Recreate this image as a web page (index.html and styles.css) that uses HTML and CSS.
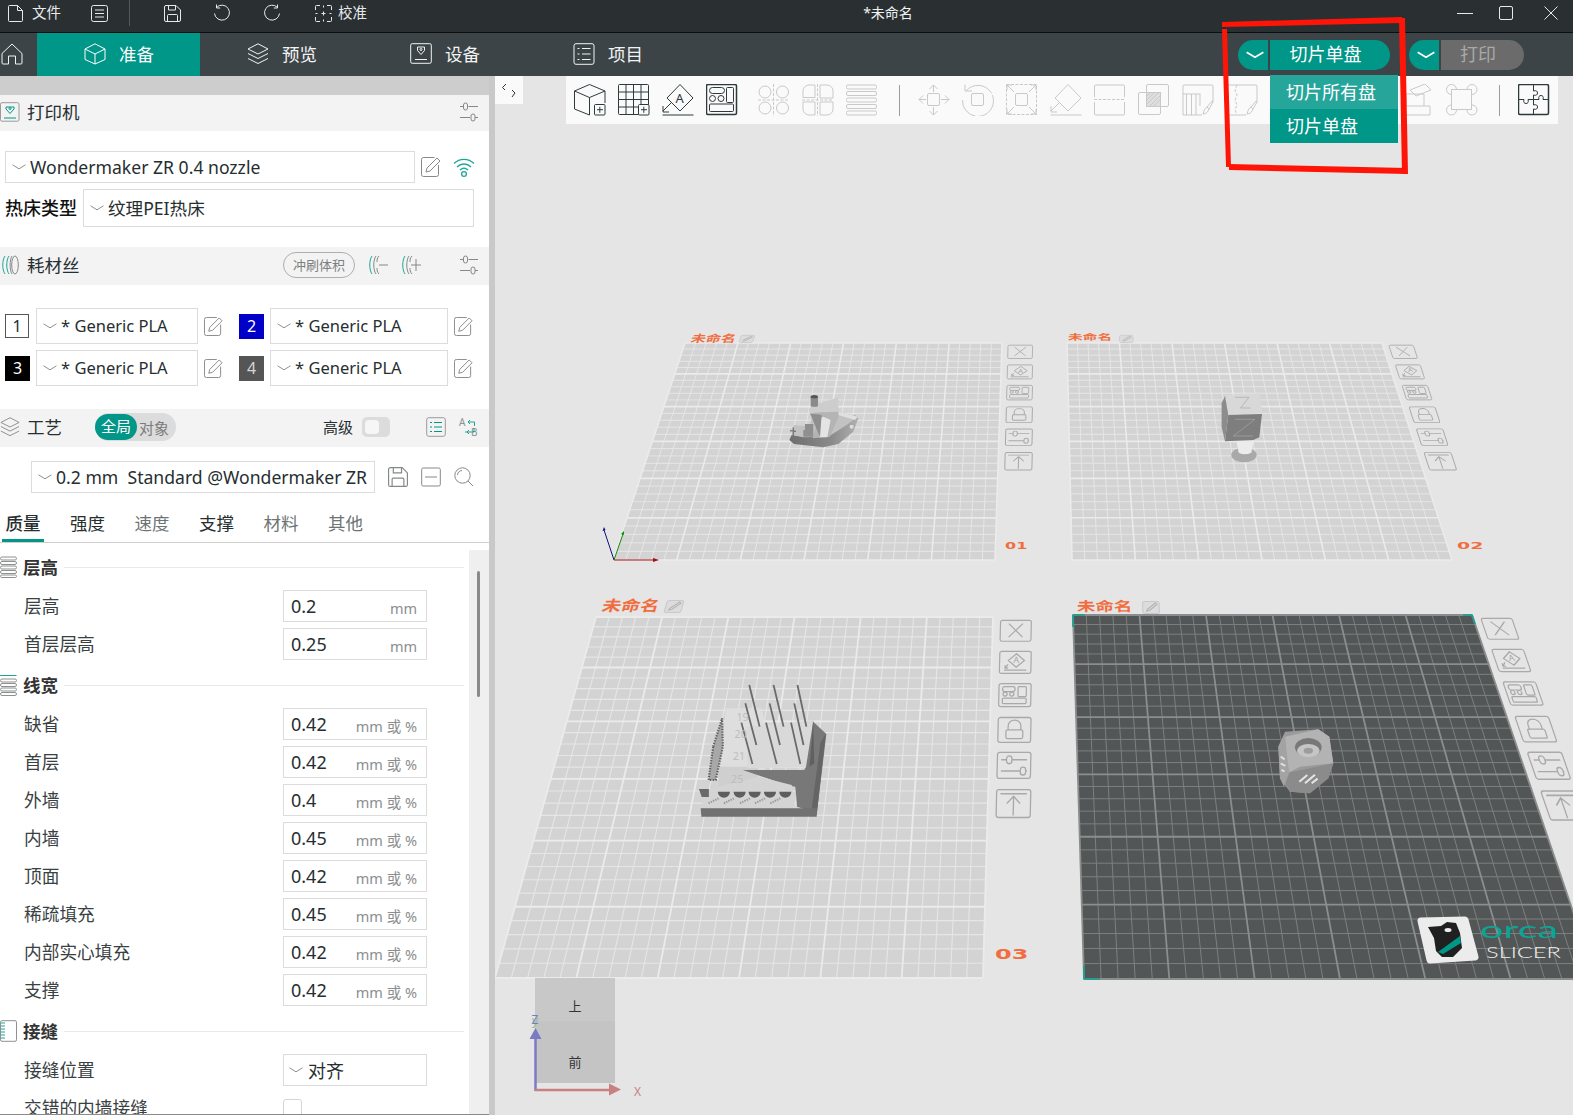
FILE: index.html
```html
<!DOCTYPE html>
<html lang="zh-CN">
<head>
<meta charset="utf-8">
<title>OrcaSlicer</title>
<link rel="stylesheet" href="styles.css">
</head>
<body>
<svg class="sprite" xmlns="http://www.w3.org/2000/svg">
  <symbol id="i-file" viewBox="0 0 17 17"><path d="M1.5 1.5a1 1 0 0 1 1-1h8l5 5v10a1 1 0 0 1-1 1h-12a1 1 0 0 1-1-1z M10.5.5v5h5"/></symbol>
  <symbol id="i-menu" viewBox="0 0 17 17"><rect x=".5" y=".5" width="16" height="16" rx="2"/><path d="M4 5h9M4 8.500h9M4 12h9"/></symbol>
  <symbol id="i-save" viewBox="0 0 17 17"><path d="M.5 2a1.500 1.500 0 0 1 1.500-1.500h10l4.500 4.500v10a1.500 1.500 0 0 1-1.500 1.500h-13a1.500 1.500 0 0 1-1.500-1.500z"/><path d="M4.500.5v4.500h7v-4.500M3.500 16.500v-6a1 1 0 0 1 1-1h8a1 1 0 0 1 1 1v6"/></symbol>
  <symbol id="i-undo" viewBox="0 0 18 18"><path d="M3.500 3.500a7.500 7.500 0 1 1-2 6M3.500.5v3.500h3.700"/></symbol>
  <symbol id="i-redo" viewBox="0 0 18 18"><path d="M14.500 3.500a7.500 7.500 0 1 0 2 6M14.500.5v3.500h-3.700"/></symbol>
  <symbol id="i-calib" viewBox="0 0 17 17"><path d="M5 .5H1.500a1 1 0 0 0-1 1V5M12 .500h3.500a1 1 0 0 1 1 1V5M5 16.500H1.500a1 1 0 0 1-1-1V12M12 16.500h3.500a1 1 0 0 0 1-1V12M.5 8.500h2M14.500 8.500h2M8.500.5v2M8.500 14.500v2M6.500 8.500h4M8.500 6.500v4"/></symbol>
  <symbol id="i-home" viewBox="0 0 22 22"><path d="M1 10.500 11 1l10 9.500V20a1 1 0 0 1-1 1h-5.500v-8h-7v8H2a1 1 0 0 1-1-1z"/></symbol>
  <symbol id="i-box" viewBox="0 0 22 22"><path d="M11 .8 21 6v10.500L11 21 1 16.500V6zM1 6l10 5 10-5M11 11v10"/></symbol>
  <symbol id="i-layers" viewBox="0 0 22 22"><path d="M11 .8 21 6 11 11 1 6zM1 10.500l10 5 10-5M1 15.500l10 5 10-5"/></symbol>
  <symbol id="i-device" viewBox="0 0 22 22"><rect x=".7" y=".7" width="20.600" height="19.600" rx="1.500"/><path d="M5 16.500h12M7.500 4h7v3.500l-3.500 4-3.500-4z"/><circle cx="11" cy="6.500" r="1"/></symbol>
  <symbol id="i-list" viewBox="0 0 22 22"><rect x="1" y=".7" width="20" height="20.600" rx="2"/><path d="M4.500 5.500h2M9 5.500h8.500M4.500 11h2M9 11h8.500M4.500 16.500h2M9 16.500h8.500"/></symbol>
  <symbol id="i-chev" viewBox="0 0 14 6"><path d="M.5.800 7 4.800 13.500.8"/></symbol>
  <symbol id="i-edit" viewBox="0 0 20 20"><path d="M17.500 8v9.500a2 2 0 0 1-2 2h-13a2 2 0 0 1-2-2v-15a2 2 0 0 1 2-2h11"/><path d="M5 15l1-4L16 1l3 3L9 14z"/></symbol>
  <symbol id="i-wifi" viewBox="0 0 22 20"><path d="M1 6.500c5.500-5.500 14.500-5.500 20 0M4 10c4-4 10-4 14 0M7 13c2.500-2.300 5.500-2.300 8 0"/><circle cx="11" cy="17" r="2.400"/></symbol>
  <symbol id="i-slide" viewBox="0 0 20 20"><path d="M1 4.500h3.500M9.500 4.500H19M1 15.500h10M16 15.500h3"/><rect x="4.500" y="1" width="4" height="7" rx="2"/><rect x="12" y="12" width="4" height="7" rx="2"/></symbol>
  <symbol id="i-printer" viewBox="0 0 20 20"><rect x=".5" y=".7" width="18.500" height="18.500" rx="1.500" class="c-gray"/><path d="M4 16h12M6 5h8v2l-4 4.500L6 7z"/><circle cx="10" cy="6.500" r="1"/></symbol>
  <symbol id="i-spool" viewBox="0 0 18 20"><path d="M4 1C1 5 1 15 4 19M8 1C5 5 5 15 8 19" class="c-teal"/><ellipse cx="14" cy="10" rx="3.300" ry="9"/><path d="M11 1C8.500 5 8.500 15 11 19"/></symbol>
  <symbol id="i-spool-minus" viewBox="0 0 20 20"><path d="M4 1C1 5 1 15 4 19" class="c-teal"/><path d="M8 1C5 5 5 15 8 19M11 1c-2 2-2 4-2 6M11 19c-2-2-2-4-2-6M11 10h9"/></symbol>
  <symbol id="i-spool-plus" viewBox="0 0 20 20"><path d="M4 1C1 5 1 15 4 19" class="c-teal"/><path d="M8 1C5 5 5 15 8 19M11 1c-2 2-2 4-2 6M11 19c-2-2-2-4-2-6M10 10h10M15 4v12"/></symbol>
  <symbol id="i-check-list" viewBox="0 0 20 20"><rect x=".7" y=".7" width="18.600" height="18.600" rx="2" class="c-gray"/><path d="M4 5.500h2M8 5.500h8M4 10h2M8 10h8M4 14.500h2M8 14.500h8"/></symbol>
  <symbol id="i-minus" viewBox="0 0 20 20"><rect x=".7" y="1" width="18.600" height="18" rx="1.500"/><path d="M4 10h12"/></symbol>
  <symbol id="i-search" viewBox="0 0 20 20"><circle cx="8.500" cy="8.500" r="7.700"/><path d="M14 14l5 5M3.500 8c0-2.500 2-4.500 4.500-4.500"/></symbol>
  <symbol id="i-stack" viewBox="0 0 17 22"><rect x=".5" y="1" width="16" height="3" rx="1.500"/><rect x=".5" y="5.500" width="16" height="3" rx="1.500"/><rect x=".5" y="10" width="16" height="3" rx="1.500"/><rect x=".5" y="14.500" width="16" height="3" rx="1.500"/><rect x=".5" y="19" width="16" height="2.500" rx="1.200"/></symbol>
  <symbol id="i-stack-top" viewBox="0 0 17 22"><path d="M0 1.500h16.500" class="c-teal"/><rect x=".5" y="5" width="16" height="3" rx="1.500"/><rect x=".5" y="9.500" width="16" height="3" rx="1.500"/><rect x=".5" y="14" width="16" height="3" rx="1.500"/><rect x=".5" y="18.500" width="16" height="3" rx="1.500"/></symbol>
  <symbol id="i-seam" viewBox="0 0 17 22"><rect x=".5" y=".7" width="16" height="20.600" rx="1.500"/><path d="M1 3h4M1 6h4M1 9h4M1 12h4M1 15h4M1 18h4" class="c-teal"/></symbol>
  <symbol id="t-cube" viewBox="0 0 32 32"><path d="M15.500.5 31 7v12M15.500.5 .5 7v18l15 6M.5 7l15 6.500L31 7M15.500 13.500V31"/><rect x="20.500" y="20.500" width="10.500" height="10.500" rx="1" class="t-white"/><path d="M23 25.700h6M25.800 22.800v6"/></symbol>
  <symbol id="t-grid" viewBox="0 0 32 32"><rect x=".5" y=".5" width="30" height="30" rx="1"/><path d="M8 .5v30M15.500.5v30M23 .5v20M.5 8h30M.5 15.500h30M.5 23h20"/><rect x="20.500" y="20.500" width="10.500" height="10.500" rx="1" class="t-white"/><path d="M23 25.700h6M25.800 22.800v6"/></symbol>
  <symbol id="t-arrange" viewBox="0 0 32 32"><rect x=".5" y=".5" width="30" height="30" rx="1.500" class="t-bold"/><rect x="3.500" y="3.500" width="15" height="6" rx="3"/><circle cx="6.500" cy="14.500" r="3"/><circle cx="15" cy="14.500" r="3"/><rect x="20.500" y="3.500" width="7" height="15" rx="1"/><rect x="3.500" y="20" width="24" height="7.500" rx="1"/></symbol>
  <symbol id="t-split1" viewBox="0 0 32 32"><circle cx="7" cy="8" r="6"/><circle cx="24.500" cy="8" r="6"/><circle cx="7" cy="24" r="6"/><circle cx="24.500" cy="24" r="6"/><path d="M0 16h31M15.500 0v32" class="t-dash"/></symbol>
  <symbol id="t-split2" viewBox="0 0 32 32"><path d="M13 1.500v12H1V7a6 6 0 0 1 6-6h6zM18 1h7a6 6 0 0 1 6 6v7H18zM13 18v13H7a6 6 0 0 1-6-6v-7zM18 18h13v7a6 6 0 0 1-6 6h-7z"/><path d="M0 16h31M15.500 0v32" class="t-dash"/></symbol>
  <symbol id="t-bars" viewBox="0 0 32 32"><rect x=".5" y="1" width="30" height="4" rx="1.500"/><rect x=".5" y="7.500" width="30" height="4" rx="1.500"/><rect x=".5" y="14" width="30" height="4" rx="1.500"/><rect x=".5" y="20.500" width="30" height="4" rx="1.500"/><rect x=".5" y="27" width="30" height="4" rx="1.500"/></symbol>
  <symbol id="t-move" viewBox="0 0 32 32"><rect x="9.500" y="9.500" width="12" height="12" rx="1.500"/><path d="M15.500 1v7M15.500 23v8M1 15.500h7M23 15.500h8M11.500 5l4-4 4 4M11.500 27l4 4 4-4M5 11.500l-4 4 4 4M27 11.500l4 4-4 4"/></symbol>
  <symbol id="t-rotate" viewBox="0 0 32 32"><rect x="9.500" y="9.500" width="12" height="12" rx="1.500"/><path d="M4 7A15.500 15.500 0 1 1 .5 16" class="t-part"/><path d="M3 .5V7h7"/></symbol>
  <symbol id="t-scale" viewBox="0 0 32 32"><rect x=".5" y=".5" width="30" height="30" class="t-dash"/><rect x="9.500" y="9.500" width="12" height="12" rx="1.500"/><path d="M1 1l7 7M30 1l-7 7M1 30l7-7M30 30l-7-7M1 6V1h5M25 1h5v5M1 25v5h5M25 30h5v-5"/></symbol>
  <symbol id="t-flat" viewBox="0 0 32 32"><path d="M18 .5 31 14 18 27 5 14zM.5 31h31M9 19 1 27M1 22v6h6"/></symbol>
  <symbol id="t-cut" viewBox="0 0 32 32"><path d="M.5 13V2a1 1 0 0 1 1-1h28a1 1 0 0 1 1 1v11M.5 18v12a1 1 0 0 0 1 1h28a1 1 0 0 0 1-1V18"/><path d="M0 15.500h31" class="t-dash"/></symbol>
  <symbol id="t-bool" viewBox="0 0 32 32"><rect x="8.500" y=".5" width="22" height="22" rx="1.500"/><rect x=".5" y="8.500" width="22" height="22" rx="1.500"/><rect x="8.500" y="8.500" width="14" height="14" class="t-hatch"/><path d="M9 12l3-3M9 16l7-7M9 20l11-11M12 22l10-10M16 22l6-6"/></symbol>
  <symbol id="t-paint" viewBox="0 0 32 32"><path d="M20 31H1V2a1 1 0 0 1 1-1h28a1 1 0 0 1 1 1v16M9.500 31V10h9M1 10h8.500M4.500 10v21M14 10v21M18 10v12"/><path d="M21 30c1-4 2-6 4-7l2 2c-1 3-3 5-6 5zM25 23l5-6 1 1-4 7"/></symbol>
  <symbol id="t-seamp" viewBox="0 0 32 32"><path d="M20 31H2a1 1 0 0 1-1-1V2a1 1 0 0 1 1-1h28a1 1 0 0 1 1 1v16"/><path d="M11 1l-2 5 2 5-2 5 2 5-2 5 2 4" class="t-dash"/><path d="M21 30c1-4 2-6 4-7l2 2c-1 3-3 5-6 5zM25 23l5-6 1 1-4 7"/></symbol>
  <symbol id="t-emboss" viewBox="0 0 32 32"><path d="M0 22h28v9H0zM4 22V10h18v12M8 6l15-6 6 6-15 6z"/></symbol>
  <symbol id="t-assembly" viewBox="0 0 32 32"><circle cx="5.500" cy="5.500" r="5"/><circle cx="26" cy="5.500" r="5"/><circle cx="5.500" cy="26" r="5"/><circle cx="26" cy="26" r="5"/><rect x="5.500" y="5.500" width="20" height="20" class="t-fillw"/></symbol>
  <symbol id="t-puzzle" viewBox="0 0 32 32"><rect x=".5" y=".5" width="30" height="30" rx="1.500" class="t-bold"/><path d="M15.500.5V7c3-1 4 .5 4 2s-1 3-4 2V15.500H10c1 3-.5 4-2 4s-3-1-2-4H.5M15.500 15.500H21c-1-3 .5-4 2-4s3 1 2 4h5.500M15.500 15.500V21c3-1 4 .5 4 2s-1 3-4 2v5.500"/></symbol>
</svg>

<div class="app">
  <header class="titlebar">
    <div class="title-left">
      <svg class="ico i17 m-file"><use href="#i-file"/></svg><span class="t-text">文件</span>
      <svg class="ico i17 m-menu"><use href="#i-menu"/></svg>
      <span class="t-sep"></span>
      <svg class="ico i17 m-save"><use href="#i-save"/></svg>
      <svg class="ico i18 m-undo"><use href="#i-undo"/></svg>
      <svg class="ico i18 m-redo"><use href="#i-redo"/></svg>
      <svg class="ico i17 m-calib"><use href="#i-calib"/></svg><span class="t-text">校准</span>
    </div>
    <div class="doc-title">*未命名</div>
    <div class="win-controls">
      <span class="w-min"></span>
      <span class="w-max"></span>
      <svg class="ico i14 w-close" viewBox="0 0 14 14"><path d="M.5.500l13 13M13.500.500l-13 13"/></svg>
    </div>
  </header>

  <nav class="navbar">
    <svg class="ico i22 nav-home"><use href="#i-home"/></svg>
    <div class="nav-tab active"><svg class="ico i22"><use href="#i-box"/></svg><span>准备</span></div>
    <div class="nav-tab"><svg class="ico i22"><use href="#i-layers"/></svg><span>预览</span></div>
    <div class="nav-tab"><svg class="ico i22"><use href="#i-device"/></svg><span>设备</span></div>
    <div class="nav-tab"><svg class="ico i22"><use href="#i-list"/></svg><span>项目</span></div>
    <div class="nav-actions">
      <div class="split-btn">
        <span class="split-arrow"><svg class="ico chev-w"><use href="#i-chev"/></svg></span>
        <span class="split-main">切片单盘</span>
      </div>
      <div class="split-btn disabled">
        <span class="split-arrow"><svg class="ico chev-w"><use href="#i-chev"/></svg></span>
        <span class="split-main">打印</span>
      </div>
    </div>
  </nav>

  <div class="main">
    <aside class="sidebar">
      <div class="strip"></div>

      <div class="panel-head">
        <svg class="ico i20 head-icon teal-ico"><use href="#i-printer"/></svg>
        <span class="head-label">打印机</span>
        <svg class="ico i20 muted push"><use href="#i-slide"/></svg>
      </div>
      <div class="printer-body">
        <div class="printer-row">
          <div class="combo c-printer"><svg class="ico chev"><use href="#i-chev"/></svg><span>Wondermaker ZR 0.4 nozzle</span></div>
          <svg class="ico i20 muted"><use href="#i-edit"/></svg>
          <svg class="ico i22 teal"><use href="#i-wifi"/></svg>
        </div>
        <div class="bed-row">
          <span class="bed-label">热床类型</span>
          <div class="combo c-bed"><svg class="ico chev"><use href="#i-chev"/></svg><span>纹理PEI热床</span></div>
        </div>
      </div>

      <div class="panel-head tall">
        <svg class="ico i20 head-icon muted"><use href="#i-spool"/></svg>
        <span class="head-label">耗材丝</span>
        <span class="pill-btn">冲刷体积</span>
        <svg class="ico i20 muted gap13"><use href="#i-spool-minus"/></svg>
        <svg class="ico i20 muted gap13"><use href="#i-spool-plus"/></svg>
        <svg class="ico i20 muted gap38"><use href="#i-slide"/></svg>
      </div>
      <div class="filaments">
        <span class="num n-white">1</span>
        <div class="combo"><svg class="ico chev"><use href="#i-chev"/></svg><span>* Generic PLA</span></div>
        <svg class="ico i20 muted"><use href="#i-edit"/></svg>
        <span class="num n-blue">2</span>
        <div class="combo"><svg class="ico chev"><use href="#i-chev"/></svg><span>* Generic PLA</span></div>
        <svg class="ico i20 muted"><use href="#i-edit"/></svg>
        <span class="num n-black">3</span>
        <div class="combo"><svg class="ico chev"><use href="#i-chev"/></svg><span>* Generic PLA</span></div>
        <svg class="ico i20 muted"><use href="#i-edit"/></svg>
        <span class="num n-gray">4</span>
        <div class="combo"><svg class="ico chev"><use href="#i-chev"/></svg><span>* Generic PLA</span></div>
        <svg class="ico i20 muted"><use href="#i-edit"/></svg>
      </div>

      <div class="panel-head tall">
        <svg class="ico i20 head-icon muted"><use href="#i-layers"/></svg>
        <span class="head-label">工艺</span>
        <div class="scope"><span class="scope-on">全局</span><span class="scope-off">对象</span></div>
        <span class="adv-label">高级</span>
        <span class="switch"></span>
        <svg class="ico i20 teal-ico gap36"><use href="#i-check-list"/></svg>
        <svg class="ico i20 muted gap14 ab-ico" viewBox="0 0 20 20"><text x="0" y="9" class="ab-text">A</text><text x="12" y="19" class="ab-text">B</text><path d="M9 5h6.500v4M11 3 9 5l2 2M15 11v4H8.500M6 15h2.500M10 13l-2 2 2 2" class="c-teal"/></svg>
      </div>
      <div class="preset-row">
        <div class="combo c-preset"><svg class="ico chev"><use href="#i-chev"/></svg><span>0.2 mm&nbsp; Standard @Wondermaker ZR</span></div>
        <svg class="ico i20 muted"><use href="#i-save"/></svg>
        <svg class="ico i20 muted"><use href="#i-minus"/></svg>
        <svg class="ico i20 muted"><use href="#i-search"/></svg>
      </div>
      <div class="tabs">
        <span class="tab active">质量</span>
        <span class="tab">强度</span>
        <span class="tab dim">速度</span>
        <span class="tab">支撑</span>
        <span class="tab dim">材料</span>
        <span class="tab dim">其他</span>
      </div>

      <div class="settings">
        <div class="settings-body">
          <div class="group"><svg class="ico g-icon"><use href="#i-stack"/></svg><span class="g-title">层高</span><span class="g-line"></span></div>
          <div class="row"><span class="r-label">层高</span><div class="input"><span>0.2</span><em>mm</em></div></div>
          <div class="row"><span class="r-label">首层层高</span><div class="input"><span>0.25</span><em>mm</em></div></div>

          <div class="group"><svg class="ico g-icon"><use href="#i-stack-top"/></svg><span class="g-title">线宽</span><span class="g-line"></span></div>
          <div class="row"><span class="r-label">缺省</span><div class="input"><span>0.42</span><em>mm 或 %</em></div></div>
          <div class="row"><span class="r-label">首层</span><div class="input"><span>0.42</span><em>mm 或 %</em></div></div>
          <div class="row"><span class="r-label">外墙</span><div class="input"><span>0.4</span><em>mm 或 %</em></div></div>
          <div class="row"><span class="r-label">内墙</span><div class="input"><span>0.45</span><em>mm 或 %</em></div></div>
          <div class="row"><span class="r-label">顶面</span><div class="input"><span>0.42</span><em>mm 或 %</em></div></div>
          <div class="row"><span class="r-label">稀疏填充</span><div class="input"><span>0.45</span><em>mm 或 %</em></div></div>
          <div class="row"><span class="r-label">内部实心填充</span><div class="input"><span>0.42</span><em>mm 或 %</em></div></div>
          <div class="row"><span class="r-label">支撑</span><div class="input"><span>0.42</span><em>mm 或 %</em></div></div>

          <div class="group"><svg class="ico g-icon"><use href="#i-seam"/></svg><span class="g-title">接缝</span><span class="g-line"></span></div>
          <div class="row"><span class="r-label">接缝位置</span><div class="input select"><svg class="ico chev"><use href="#i-chev"/></svg><span>对齐</span></div></div>
          <div class="row"><span class="r-label">交错的内墙接缝</span><span class="checkbox"></span></div>
        </div>
        <div class="track"><span class="thumb"></span></div>
      </div>
    </aside>
    <div class="divider"></div>

    <section class="canvas">
      <svg class="scene" viewBox="495 76 1078 1039" xmlns="http://www.w3.org/2000/svg">
        <defs>
          <linearGradient id="hull" x1="0" x2="1" y1="0" y2="0"><stop offset="0" stop-color="#6e6e6e"/><stop offset=".6" stop-color="#8a8a8a"/><stop offset="1" stop-color="#b0b0b0"/></linearGradient>
          <g id="p-close"><rect x=".5" y=".5" width="31" height="23" rx="2"/><path d="M9 4l14 15M23 4 9 19"/></g>
          <g id="p-auto"><rect x=".5" y=".5" width="31" height="23" rx="2"/><path d="M17 3l8 7-8 7-8-7zM5 20h22M9 14l-3 4M6 15v3h3"/></g>
          <g id="p-arr"><rect x=".5" y=".5" width="31" height="23" rx="2"/><rect x="4" y="3.500" width="12" height="5" rx="2"/><circle cx="6.500" cy="11" r="2"/><circle cx="13" cy="11" r="2"/><rect x="19" y="3.500" width="8" height="10" rx="1"/><rect x="4" y="15" width="23" height="5.500" rx="1"/></g>
          <g id="p-lock"><rect x=".5" y=".5" width="31" height="23" rx="2"/><rect x="8" y="12" width="16" height="8" rx="1.500"/><path d="M10 12V8a6 5 0 0 1 12 0v4"/></g>
          <g id="p-set"><rect x=".5" y=".5" width="31" height="23" rx="2"/><path d="M4 7h5M14 7h14M4 17h18M27 17h1"/><rect x="9" y="3.500" width="5" height="7" rx="2.500"/><rect x="22" y="13.500" width="5" height="7" rx="2.500"/></g>
          <g id="p-top"><rect x=".5" y=".5" width="31" height="23" rx="2"/><path d="M4 4h24M16 6v16M10 12l6-6 6 6"/></g>
          <g id="p-pen"><rect x=".5" y=".5" width="15" height="12" rx="2" class="pen-box"/><path d="M4 10l1-2 7-6 1.500 1.500-7 6z" class="pen-mark"/></g>
        </defs>
        <g id="grids"></g>

        <!-- axes on first plate -->
        <path d="M614 560 604 530" class="ax ax-b"/><path d="M604 527l-1.500 4 3-1z" class="ax-fill-b"/>
        <path d="M614 560 623 534" class="ax ax-g"/><path d="M624 531l-3 3 3 1z" class="ax-fill-g"/>
        <path d="M614 560H654" class="ax ax-r"/><path d="M659 560l-6-2v4z" class="ax-fill-r"/>

        <!-- boat -->
        <g transform="translate(590 320) scale(.3333)">
          <path d="M598 360 612 372 700 382 745 372 790 335 805 295 795 285 760 300 730 330 660 350 605 345z" fill="url(#hull)"/>
          <path d="M605 345 612 315 660 320 668 275 745 275 803 290 770 315 715 350 640 352z" fill="#c2c2c2"/>
          <path d="M745 275 803 290 795 300 745 285z" fill="#e0e0e0"/>
          <path d="M660 268 742 233 746 290 720 350 668 355 688 290z" fill="#b4b4b4"/>
          <path d="M656 268 665 258 740 233 745 240 745 275 658 278z" fill="#cdcdcd"/>
          <path d="M688 352 690 296 700 290 722 300 712 352z" fill="#e4e4e4"/>
          <path d="M690 352 660 280 695 285z" fill="#8e8e8e"/>
          <path d="M640 330h30v20h-30zM645 312h25v18h-25z" fill="#8f8f8f"/>
          <rect x="662" y="228" width="22" height="32" rx="4" fill="#8a8a8a"/>
          <ellipse cx="673" cy="230" rx="11" ry="5" fill="#555"/>
          <path d="M600 332l18 2M610 322v28" stroke="#777" stroke-width="4"/>
          <ellipse cx="785" cy="320" rx="6" ry="6" fill="#ddd"/>
        </g>

        <!-- Z cube -->
        <g transform="translate(1050 320) scale(.3333)">
          <ellipse cx="582" cy="405" rx="38" ry="22" fill="#a9a9a9"/>
          <path d="M560 366h50l-6 32q-20 10-38 0z" fill="#ececec"/>
          <path d="M530 225 630 220 636 280 535 285z" fill="#d8d8d8"/>
          <path d="M535 285 636 282 628 352 610 360 525 364z" fill="#7e7e7e"/>
          <path d="M515 250 525 228 535 285 525 364 515 322z" fill="#8c8c8c"/>
          <path d="M555 232h42l-25 32h30" class="z-mark"/>
          <path d="M555 298h60l-65 50h60" class="z-mark"/>
        </g>

        <!-- calibration tower -->
        <g transform="translate(490 590) scale(.3571 .3333)">
          <path d="M660 355h100l10 45v200h-130z" fill="#dedede"/>
          <path d="M640 530h110v60H640z" fill="#cfcfcf"/>
          <path d="M720 410 905 390 905 530 720 535z" fill="#d9d9d9"/>
          <path d="M625 470 650 385 652 470 632 570 612 570z" class="lattice"/>
          <path d="M708 540 880 540 885 530 905 395 942 432 915 670 860 650 855 590 830 585z" fill="#787878"/>
          <path d="M905 390 908 520 895 530z" fill="#606060"/>
          <path d="M940 432 915 675 900 665 925 460z" fill="#656565"/>
          <path d="M753 560 845 585 855 655H588L612 600 640 590z" fill="#d4d4d4"/>
          <path d="M590 655H915V680H592z" fill="#717171"/>
          <path d="M585 597h28v24h-20z" fill="#6a6a6a"/>
          <path d="M638 605a17 18 0 0 0 34 0zM682 605a17 18 0 0 0 34 0zM724 605a17 18 0 0 0 34 0zM767 605a17 18 0 0 0 34 0zM810 605a17 18 0 0 0 34 0z" fill="#5e5e5e"/>
          <path d="M726 285 755 410M794 285 822 410M861 285 886 410M715 340 746 465M783 340 812 465M852 340 878 465M704 398 735 522M773 398 803 522M843 398 869 522" class="spike"/>
          <path d="M612 640l28-15M655 640l28-15M700 640l28-15M742 640l28-15M785 640l28-15" class="micro"/>
          <text x="690" y="392" class="tower-t">19</text><text x="685" y="445" class="tower-t">20</text><text x="680" y="510" class="tower-t">21</text><text x="675" y="578" class="tower-t">25</text>
        </g>

        <!-- nut cube -->
        <g transform="translate(1060 590) scale(.3333)">
          <path d="M675 425 775 418 808 440 820 520 805 565 750 610 690 605 660 565 655 470z" fill="#9a9a9a"/>
          <path d="M675 440 775 418 808 440 820 520 720 530 685 548z" fill="#b3b3b3"/>
          <path d="M685 548 820 520 805 565 750 610 690 605 670 570z" fill="#8b8b8b"/>
          <path d="M655 470 672 435 688 548 672 590 660 565z" fill="#a3a3a3"/>
          <ellipse cx="745" cy="472" rx="40" ry="28" fill="#787878"/>
          <ellipse cx="745" cy="482" rx="34" ry="20" fill="#c5c5c5"/>
          <ellipse cx="745" cy="482" rx="14" ry="9" fill="#9c9c9c"/>
          <path d="M718 575l24-20M735 580l30-26M755 580l18-14" class="nut-mark"/>
          <path d="M662 500l12 8M662 520l14 8M664 540l10 4" class="nut-mark2"/>
        </g>

        <!-- logo -->
        <g class="logo">
          <path d="M1421 921 1465 920 1475 957 1430 960z" class="logo-plate"/>
          <path d="M1428 927 1441 926 1447 922 1456 923 1460 933 1462 948 1453 957 1442 957 1436 951 1434 938z" class="logo-orca"/>
          <path d="M1438 952 1460 936 1461 943 1443 954z" class="logo-teal"/>
          <ellipse cx="1448" cy="930" rx="3.500" ry="2" class="logo-eye"/>
          <text x="1480" y="938" textLength="78" lengthAdjust="spacingAndGlyphs" class="logo-orca-t">orca</text>
          <text x="1486" y="958" textLength="75" lengthAdjust="spacingAndGlyphs" class="logo-slicer-t">SLICER</text>
        </g>

        <!-- navigation cube and gizmo -->
        <rect x="535" y="978" width="80" height="43" class="cube-top"/>
        <rect x="535" y="1021" width="80" height="62" class="cube-front"/>
        <text x="575" y="1011" class="cube-t">上</text>
        <text x="575" y="1067" class="cube-t">前</text>
        <path d="M535.500 1091V1038" class="gz-b"/><path d="M535.500 1028l6 11h-12z" class="gz-bf"/>
        <path d="M535 1090H611" class="gz-r"/><path d="M621 1089.500l-12-6v12z" class="gz-rf"/>
        <text x="634" y="1096" class="gz-x">X</text>
        <text x="535" y="1025" class="gz-y">y</text>
        <text x="535" y="1024" class="gz-z">Z</text>
      </svg>

      <button class="collapse" type="button" aria-label="collapse"><svg class="ico col-ico" viewBox="0 0 16 16"><path d="M5 2 1.500 5.500 4 8M11 8l3 3-3 4"/></svg></button>

      <div class="toolbar">
        <svg class="ico tool on"><use href="#t-cube"/></svg>
        <svg class="ico tool on"><use href="#t-grid"/></svg>
        <svg class="ico tool on" viewBox="0 0 32 32"><path d="M18 .5 31 14 18 27 5 14z M.5 31h31M9 19 1 27M1 22v6h6"/><text x="13.500" y="19" class="auto-a">A</text></svg>
        <svg class="ico tool on"><use href="#t-arrange"/></svg>
        <svg class="ico tool off g20"><use href="#t-split1"/></svg>
        <svg class="ico tool off"><use href="#t-split2"/></svg>
        <svg class="ico tool off"><use href="#t-bars"/></svg>
        <span class="tool-sep"></span>
        <svg class="ico tool off"><use href="#t-move"/></svg>
        <svg class="ico tool off"><use href="#t-rotate"/></svg>
        <svg class="ico tool off"><use href="#t-scale"/></svg>
        <svg class="ico tool off"><use href="#t-flat"/></svg>
        <svg class="ico tool off"><use href="#t-cut"/></svg>
        <svg class="ico tool off"><use href="#t-bool"/></svg>
        <svg class="ico tool off"><use href="#t-paint"/></svg>
        <svg class="ico tool off"><use href="#t-seamp"/></svg>
        <svg class="ico tool off"><use href="#t-paint"/></svg>
        <svg class="ico tool off"><use href="#t-paint"/></svg>
        <svg class="ico tool off"><use href="#t-paint"/></svg>
        <svg class="ico tool off"><use href="#t-emboss"/></svg>
        <svg class="ico tool off"><use href="#t-assembly"/></svg>
        <span class="tool-sep"></span>
        <svg class="ico tool on"><use href="#t-puzzle"/></svg>
      </div>
    </section>
  </div>

  <div class="slice-menu">
    <div class="slice-item hover">切片所有盘</div>
    <div class="slice-item">切片单盘</div>
  </div>

  <svg class="annotation" viewBox="0 0 1573 1115" xmlns="http://www.w3.org/2000/svg">
    <polygon points="1222,22 1402,17 1402,23 1222,27"/>
    <polygon points="1222,29 1227,29 1231,167 1226,167"/>
    <polygon points="1399,18 1405,18 1408,174 1402,174"/>
    <polygon points="1229,164 1407,168 1407,174 1229,170"/>
  </svg>
</div>
<script src="app.js"></script>
</body>
</html>
```
FILE: styles.css
```css
* { box-sizing: border-box; }
html, body { margin: 0; padding: 0; }
body {
  font-family: "Noto Sans", "Noto Sans CJK SC", sans-serif;
  color: #262e30;
  background: #e5e5e5;
  overflow: hidden;
}
.sprite { position: absolute; width: 0; height: 0; }
.ico { fill: none; stroke: currentColor; stroke-width: 1; flex: none; display: block; }
.i14 { width: 14px; height: 14px; }
.i17 { width: 17px; height: 17px; }
.i18 { width: 18px; height: 18px; }
.i20 { width: 20px; height: 20px; }
.i22 { width: 22px; height: 22px; }
.muted { color: #858988; }
.teal { color: #1fa596; stroke-width: 1.300; }
.teal-ico { color: #009688; }
.c-gray { stroke: #9a9a9a; }
.c-teal { stroke: #1fa596; }
.ab-ico { overflow: visible; }
.ab-text { font: 10px "Noto Sans", sans-serif; fill: #8d9190; stroke: none; }

.app {
  position: relative;
  width: 1573px;
  height: 1115px;
  display: flex;
  flex-direction: column;
  overflow: hidden;
}

/* title bar */
.titlebar {
  height: 33px;
  flex: none;
  display: flex;
  align-items: center;
  padding-bottom: 6px;
  background: #2a2f32;
  border-bottom: 1px solid #0c0e0f;
  color: #e8eaea;
}
.title-left { width: 368px; display: flex; align-items: center; padding-left: 7px; flex: none; }
.t-text { font-size: 14.500px; margin: 0 0 2px 8px; line-height: 20px; }
.m-menu { margin-left: 30px; }
.t-sep { width: 1px; height: 26px; background: #55595b; margin-left: 21px; }
.m-save { margin-left: 34px; }
.m-undo { margin-left: 32px; }
.m-redo { margin-left: 32px; }
.m-calib { margin-left: 34px; }
.m-calib + .t-text { margin-left: 6px; }
.doc-title { flex: 1; text-align: center; font-size: 14px; color: #f0f2f2; margin-bottom: 2px; }
.win-controls { width: 165px; flex: none; display: flex; align-items: center; padding-left: 49px; }
.w-min { width: 16px; height: 1px; background: #e8eaea; }
.w-max { width: 14px; height: 14px; border: 1px solid #e8eaea; border-radius: 2px; margin-left: 26px; }
.w-close { margin-left: 31px; }

/* navigation */
.navbar {
  height: 43px;
  flex: none;
  display: flex;
  align-items: stretch;
  background: #3d4447;
  color: #f2f4f4;
}
.nav-home { width: 22px; height: 22px; margin: 10px 14px 0 1px; }
.nav-tab {
  width: 163px;
  display: flex;
  align-items: center;
  padding: 0 0 2px 47px;
  gap: 13px;
  font-size: 17.500px;
}
.nav-tab.active { background: #009688; color: #fff; }
.nav-actions { margin-left: auto; display: flex; align-items: center; padding: 0 49px 0 0; gap: 19px; }
.split-btn { display: flex; height: 30px; gap: 2px; }
.split-arrow {
  width: 30px;
  background: #009688;
  border-radius: 15px 0 0 15px;
  display: flex;
  align-items: center;
  justify-content: center;
  padding-left: 3px;
}
.chev-w { width: 18px; height: 8px; color: #fff; stroke-width: 1.300; }
.split-main {
  width: 120px;
  background: #009688;
  color: #fff;
  border-radius: 0 15px 15px 0;
  font-size: 18px;
  text-align: center;
  line-height: 29px;
  padding-right: 9px;
}
.split-btn.disabled .split-main { width: 83px; background: #6b6b6b; color: #a9a9a9; }

.main { flex: 1; display: flex; min-height: 0; }

/* sidebar */
.sidebar {
  width: 489px;
  flex: none;
  display: flex;
  flex-direction: column;
  background: #fff;
  border-bottom: 1px solid #8a8a8a;
  overflow: hidden;
}
.divider { width: 6px; flex: none; background: #c9c9c9; }
.strip { height: 19px; flex: none; background: #cdcdcd; }
.panel-head {
  height: 36px;
  flex: none;
  display: flex;
  align-items: center;
  background: #f3f3f3;
  padding: 0 10px 2px 0;
}
.panel-head.tall { height: 38px; }
.head-icon { margin-right: 7px; }
.head-label { font-size: 17.500px; margin-bottom: 2px; }
.push { margin-left: auto; }
.gap13 { margin-left: 13px; }
.gap14 { margin-left: 13px; }
.gap36 { margin-left: 36px; }
.gap38 { margin-left: 38px; }

.combo {
  display: flex;
  align-items: center;
  gap: 4px;
  height: 36px;
  padding-left: 6px;
  border: 1px solid #dcdcdc;
  font-size: 17.600px;
  white-space: nowrap;
  overflow: hidden;
  min-width: 0;
}
.chev { width: 14px; height: 6px; color: #8d9190; }

.printer-body { padding: 20px 0 20px 5px; flex: none; }
.printer-row { display: flex; align-items: center; height: 32px; }
.c-printer { width: 410px; height: 32px; margin-right: 6px; }
.printer-row .teal { margin-left: 12px; }
.bed-row { display: flex; align-items: center; margin-top: 6px; height: 38px; }
.bed-label { font-size: 18px; font-weight: 500; width: 78px; color: #111; margin-bottom: 2px; }
.c-bed { width: 391px; height: 38px; padding-bottom: 1px; }

.pill-btn {
  margin-left: auto;
  width: 72px;
  height: 26px;
  border: 1px solid #aeaeae;
  border-radius: 13px;
  font-size: 13px;
  text-align: center;
  line-height: 24px;
  color: #7a7f80;
}

.filaments {
  flex: none;
  display: grid;
  grid-template-columns: 25px 162px 19px 35px 178px 19px;
  grid-auto-rows: 36px;
  column-gap: 6px;
  row-gap: 6px;
  align-items: center;
  padding: 23px 0 23px 5px;
}
.filaments .combo { width: 100%; font-size: 16.500px; padding-bottom: 2px; }
.filaments .combo .chev { margin-top: 2px; }
.filaments .i20 { width: 19px; height: 19px; }
.num { width: 25px; height: 25px; display: flex; align-items: center; justify-content: center; font-size: 16px; }
.n-white { width: 24px; height: 24px; border: 1px solid #555; }
.n-blue { background: #0000c8; color: #fff; margin-left: 10px; }
.n-black { background: #000; color: #fff; }
.n-gray { background: #555; color: #d5d5d5; margin-left: 10px; }

.scope {
  margin-left: 33px;
  width: 81px;
  height: 28px;
  border-radius: 14px;
  background: #dcdcdc;
  display: flex;
  align-items: center;
  font-size: 15px;
}
.scope-on {
  width: 42px;
  height: 26px;
  border-radius: 13px;
  background: #009688;
  color: #fff;
  text-align: center;
  line-height: 25px;
}
.scope-off { color: #7b7b7b; margin-left: 2px; }
.adv-label { margin-left: auto; font-size: 15px; margin-bottom: 2px; }
.switch {
  margin-left: 9px;
  width: 28px;
  height: 20px;
  border-radius: 5px;
  background: #dcdcdc;
  position: relative;
}
.switch::after {
  content: "";
  position: absolute;
  left: 3px;
  top: 3px;
  width: 14px;
  height: 14px;
  border-radius: 4px;
  background: #f6f6f6;
}

.preset-row { flex: none; display: flex; align-items: center; padding: 14px 0 0 31px; gap: 13px; }
.c-preset { width: 344px; height: 32px; }

.tabs {
  flex: none;
  height: 50px;
  display: flex;
  align-items: flex-end;
  gap: 22.500px;
  padding-left: 2px;
  border-bottom: 1px solid #cfcfcf;
}
.tab { width: 42px; text-align: center; font-size: 17.500px; line-height: 32px; border-bottom: 3px solid transparent; }
.tab.active { border-bottom-color: #009688; font-weight: 500; }
.tab.dim { color: #6e7475; }

.settings { flex: 1; display: flex; min-height: 0; overflow: hidden; }
.settings-body { width: 469px; flex: none; padding: 12px 5px 0 0; }
.track { width: 20px; flex: none; margin-top: 7px; background: #efefef; }
.thumb { display: block; width: 3px; height: 126px; margin: 21px 0 0 8px; background: #8a8a8a; border-radius: 2px; }

.group { display: flex; align-items: center; height: 24px; margin: 13px 0 11px; }
.settings-body .group:first-child { margin-top: 0; }
.g-icon { width: 17px; height: 22px; color: #8d9190; margin-right: 6px; }
.g-title { font-size: 17.500px; font-weight: 700; color: #333; margin-bottom: 2px; }
.g-line { flex: 1; height: 1px; background: #e8e8e8; margin-left: 6px; }
.row { display: flex; align-items: center; height: 32px; padding-left: 24px; margin-bottom: 6px; }
.r-label { width: 259px; flex: none; font-size: 17.700px; color: #3a4142; white-space: nowrap; margin-bottom: 2px; }
.input {
  width: 144px;
  height: 32px;
  border: 1px solid #dcdcdc;
  display: flex;
  align-items: center;
  justify-content: space-between;
  padding: 0 9px 0 7px;
  font-size: 18px;
}
.input em { font-style: normal; font-size: 14.500px; color: #8a8e8f; margin-top: 3px; }
.input.select { justify-content: flex-start; gap: 5px; padding-left: 5px; }
.checkbox { width: 19px; height: 19px; border: 1px solid #d5d5d5; border-radius: 3px; }

/* canvas */
.canvas { flex: 1; position: relative; background: #e5e5e5; overflow: hidden; min-width: 0; }
.scene { display: block; width: 1078px; height: 1039px; }
.collapse {
  position: absolute;
  left: 0;
  top: 0;
  width: 28px;
  height: 28px;
  padding: 0;
  border: 0;
  background: #fafafa;
  display: flex;
  align-items: center;
  justify-content: center;
}
.col-ico { width: 16px; height: 16px; color: #333; }
.toolbar {
  position: absolute;
  left: 71px;
  top: 0;
  width: 992px;
  height: 48px;
  padding-left: 8px;
  background: #fafafa;
  display: flex;
  align-items: center;
  gap: 12px;
}
.tool { width: 32px; height: 32px; }
.tool.on { color: #2d3a3c; }
.tool.off { color: #c9c9c9; }
.g20 { margin-left: 8px; }
.tool-sep { width: 1px; height: 31px; background: #9c9c9c; margin: 0 6px 0 9px; flex: none; }
.t-white { fill: #fafafa; }
.t-bold { stroke-width: 1.500; }
.t-dash { stroke-dasharray: 3 1.500; }
.t-part { stroke-dasharray: 30 2; }
.t-hatch { fill: #dedede; }
.t-fillw { fill: #fafafa; }
.auto-a { font: 13px "Noto Sans", sans-serif; fill: currentColor; stroke: none; }

/* dropdown and annotation */
.slice-menu { position: absolute; left: 1270px; top: 75px; width: 128px; color: #fff; font-size: 18px; }
.slice-item { height: 34px; line-height: 35px; padding-left: 16px; background: #009688; }
.slice-item.hover { background: #26a69a; }
.annotation { position: absolute; left: 0; top: 0; width: 1573px; height: 1115px; pointer-events: none; }
.annotation polygon { fill: #ff1508; }

/* scene */
.plate-line { stroke-linecap: butt; }
.p-icons { fill: none; stroke: #a9a9a9; stroke-width: 1.200; }
.p-a { font: 9px "Noto Sans", sans-serif; fill: #a9a9a9; stroke: none; }
.plate-label { font: 700 16px "Noto Sans CJK SC", sans-serif; fill: #f26d3d; }
.plate-num { font: 700 16px "DejaVu Sans", sans-serif; fill: #f26d3d; }
.pen-box { fill: #dcdcdc; stroke: #c9c9c9; }
.pen-mark { fill: none; stroke: #b2b2b2; }
.ax { stroke-width: 1; fill: none; }
.ax-b { stroke: #101080; } .ax-fill-b { fill: #101080; }
.ax-g { stroke: #109010; } .ax-fill-g { fill: #109010; }
.ax-r { stroke: #a01010; } .ax-fill-r { fill: #a01010; }
.z-mark { fill: none; stroke: #a8a8a8; stroke-width: 2; }
.spike { fill: none; stroke: #6a6a6a; stroke-width: 5; }
.lattice { fill: #a8a8a8; stroke: #606060; stroke-width: 6; stroke-dasharray: 4 4; }
.micro { fill: none; stroke: #9a9a9a; stroke-width: 6; stroke-dasharray: 4 3; }
.tower-t { font: 30px "Noto Sans", sans-serif; fill: #bdbdbd; }
.nut-mark { fill: none; stroke: #e6e6e6; stroke-width: 6; }
.nut-mark2 { fill: none; stroke: #dedede; stroke-width: 6; }
.logo-plate { fill: #ececec; stroke: #ececec; stroke-width: 7; stroke-linejoin: round; }
.logo-orca { fill: #202020; }
.logo-teal { fill: #009688; }
.logo-eye { fill: #ececec; }
.logo-orca-t { font: 400 24px Lato, sans-serif; fill: #0aa595; }
.logo-slicer-t { font: 300 15px Lato, sans-serif; fill: #f0f0f0; }
.cube-top { fill: #c8c8c8; }
.cube-front { fill: #c4c4c4; }
.cube-t { font: 13px "Noto Sans CJK SC", sans-serif; fill: #333; text-anchor: middle; }
.gz-b { stroke: #7b7bc4; stroke-width: 2.500; }
.gz-bf { fill: #7b7bc4; }
.gz-r { stroke: #c98080; stroke-width: 2.500; }
.gz-rf { fill: #c98080; }
.gz-x { font: 12px "Noto Sans", sans-serif; fill: #c98080; }
.gz-z { font: 12px "Noto Sans", sans-serif; fill: #7b7bc4; text-anchor: middle; }
.gz-y { font: 12px "Noto Sans", sans-serif; fill: #8fc08f; text-anchor: middle; }
```
FILE: app.js
```js
(function () {
  var NS = "http://www.w3.org/2000/svg";
  var host = document.getElementById("grids");

  var plates = [
    { tl: [685, 343], tr: [1002, 343], br: [995, 560], bl: [613, 560], fill: "#d3d3d3", minor: "#e6e6e6", major: "#ebebeb", mw: 1, Mw: 1.6, ik: 1.04,
      label: { x: 690, y: 342, sx: .94, sy: .62 }, pen: { x: 741, y: 335, s: .9, k: .6 }, num: { t: "01", x: 1005, y: 549, sx: 1, sy: .55 } },
    { tl: [1067, 343], tr: [1382, 343], br: [1452, 560], bl: [1072, 560], fill: "#d3d3d3", minor: "#e6e6e6", major: "#ebebeb", mw: 1, Mw: 1.6, ik: 1.04,
      label: { x: 1068, y: 340, sx: .92, sy: .52 }, pen: { x: 1119, y: 335, s: .9, k: .6 }, num: { t: "02", x: 1457, y: 549, sx: 1.18, sy: .55 } },
    { tl: [596, 617], tr: [993, 617], br: [983, 978], bl: [495, 978], fill: "#d3d3d3", minor: "#e6e6e6", major: "#ebebeb", mw: 1.1, Mw: 1.8, ik: 1,
      label: { x: 601, y: 611, sx: 1.19, sy: .92 }, pen: { x: 667, y: 600, s: 1.1, k: 1 }, num: { t: "03", x: 995, y: 959, sx: 1.5, sy: .85 } },
    { tl: [1073, 615], tr: [1472, 615], br: [1596, 979], bl: [1084, 979], fill: "#525656", minor: "#7c807e", major: "#8a8e8c", mw: 1, Mw: 1.8, ik: 1.03, selected: true,
      label: { x: 1077, y: 611, sx: 1.16, sy: .82 }, pen: { x: 1142, y: 601, s: 1.1, k: 1 } }
  ];

  var iconRows = [
    ["p-close", .010, .083], ["p-auto", .113, .187], ["p-arr", .216, .290],
    ["p-lock", .320, .397], ["p-set", .423, .500], ["p-top", .528, .607]
  ];

  function el(name, attrs, parent) {
    var node = document.createElementNS(NS, name);
    for (var key in attrs) node.setAttribute(key, attrs[key]);
    parent.appendChild(node);
    return node;
  }
  function lerp(a, b, k) { return [a[0] + (b[0] - a[0]) * k, a[1] + (b[1] - a[1]) * k]; }

  plates.forEach(function (p) {
    var wt = p.tr[0] - p.tl[0], wb = p.br[0] - p.bl[0];
    function at(u, t) {
      var s = t * wt / ((1 - t) * wb + t * wt);
      return lerp(lerp(p.tl, p.tr, u), lerp(p.bl, p.br, u), s);
    }
    var g = el("g", {}, host);
    el("polygon", { points: [p.tl, p.tr, p.br, p.bl].join(" "), fill: p.fill }, g);

    [false, true].forEach(function (wantMajor) {
      for (var i = 0; i <= 30; i++) {
        var isMajor = i % 5 === 0;
        if (isMajor !== wantMajor) continue;
        var stroke = isMajor ? p.major : p.minor, width = isMajor ? p.Mw : p.mw;
        var a = at(i / 30, 0), b = at(i / 30, 1), c = at(0, i / 30), d = at(1, i / 30);
        el("line", { x1: a[0], y1: a[1], x2: b[0], y2: b[1], stroke: stroke, "stroke-width": width, "class": "plate-line" }, g);
        el("line", { x1: c[0], y1: c[1], x2: d[0], y2: d[1], stroke: stroke, "stroke-width": width, "class": "plate-line" }, g);
      }
    });

    if (p.selected) {
      var teal = { fill: "none", stroke: "#12a08e", "stroke-width": 1.6 };
      el("path", Object.assign({ d: "M1073 627V615H1085" }, teal), g);
      el("path", Object.assign({ d: "M1463 615H1472L1475 624" }, teal), g);
      el("path", Object.assign({ d: "M1084 966V979H1100" }, teal), g);
    }

    var icons = el("g", { "class": "p-icons" }, g);
    iconRows.forEach(function (row) {
      var t0 = row[1] * p.ik, t1 = row[2] * p.ik;
      var o = at(1.018, t0), x = at(1.098, t0), y = at(1.018, t1);
      var cell = el("g", {
        transform: "matrix(" + [(x[0] - o[0]) / 32, (x[1] - o[1]) / 32, (y[0] - o[0]) / 24, (y[1] - o[1]) / 24, o[0], o[1]].join(" ") + ")"
      }, icons);
      el("use", { href: "#" + row[0] }, cell);
      if (row[0] === "p-auto") {
        var letter = el("text", { x: 14, y: 13, "class": "p-a" }, cell);
        letter.textContent = "A";
      }
    });

    var shear = (p.tl[0] - p.bl[0]) / (p.bl[1] - p.tl[1]);
    var L = p.label;
    var label = el("text", {
      "class": "plate-label",
      transform: "matrix(" + [L.sx, 0, -shear * L.sy, L.sy, L.x, L.y].join(" ") + ")"
    }, g);
    label.textContent = "未命名";
    el("use", {
      href: "#p-pen",
      transform: "matrix(" + [p.pen.s, 0, -shear * p.pen.k, p.pen.k, p.pen.x, p.pen.y].join(" ") + ")"
    }, g);
    if (p.num) {
      var num = el("text", { "class": "plate-num", transform: "matrix(" + [p.num.sx, 0, 0, p.num.sy, p.num.x, p.num.y].join(" ") + ")" }, g);
      num.textContent = p.num.t;
    }
  });
})();
```
